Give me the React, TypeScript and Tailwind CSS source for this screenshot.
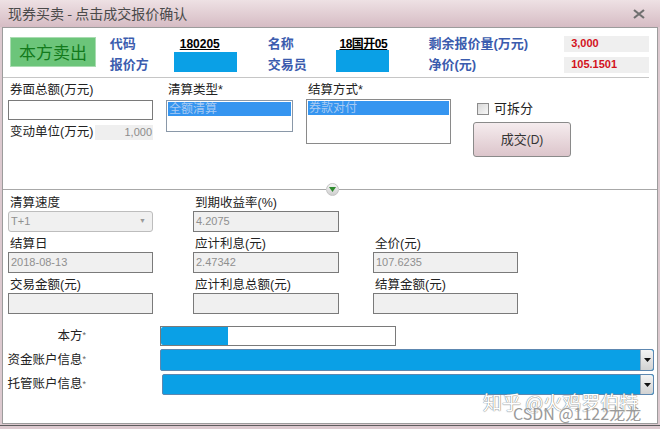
const blue = 'bg-[#0aa0e6]';

function Field({ label, value, select }: { label: string; value?: string; select?: boolean }) {
  return (
    <div className="flex flex-col">
      <div className="h-[15px] leading-[15px] text-[12.5px] text-[#222] pl-[2px] whitespace-nowrap">{label}</div>
      <div
        className={
          'flex items-center justify-between h-[21px] px-[2px] text-[11px] text-[#8f8f8f] bg-[#f0f0f0] ' +
          (select ? 'border border-[#bdbdbd] rounded-[3px]' : 'border border-[#7a7a7a]')
        }
      >
        <span>{value}</span>
        {select && <span className="mr-[4px] text-[7px] text-[#9a9a9a]">▼</span>}
      </div>
    </div>
  );
}

function DropArrow() {
  return (
    <div className="w-[13px] h-full flex items-center justify-center bg-gradient-to-b from-[#f4f4f4] to-[#d2d2d2] border-l border-[#9aa9b8] rounded-r-[2px]">
      <svg width="7" height="4" viewBox="0 0 7 4">
        <path d="M0 0h7L3.5 4z" fill="#111" />
      </svg>
    </div>
  );
}

function RowLabel({ text }: { text: string }) {
  return (
    <div className="ml-[3px] w-[80px] flex justify-end items-center whitespace-nowrap text-[12.5px]">
      {text}
      <span className="text-[9px] text-[#666]">*</span>
    </div>
  );
}

export default function App() {
  return (
    <div className="relative w-[660px] h-[429px] overflow-hidden bg-[#dcc9cf] font-['Liberation_Sans','Noto_Sans_CJK_SC',sans-serif]">
      {/* title bar */}
      <div className="h-[27px] flex items-center justify-between pl-[8px] pr-[15px] bg-gradient-to-b from-[#eee1e4] to-[#d6bcc4]">
        <span className="text-[14px] text-[#4a4a4a] font-['Noto_Sans_CJK_SC',sans-serif]">现券买卖 - 点击成交报价确认</span>
        <svg width="12" height="10" viewBox="0 0 12 10">
          <path d="M1 1l10 8M11 1L1 9" stroke="#707070" strokeWidth="2.2" />
        </svg>
      </div>

      {/* body */}
      <div className="ml-[2px] w-[656px] h-[397px] bg-white border border-[#9c9c9c] flex flex-col">
        {/* header */}
        <div className="flex items-start h-[50px] pt-[5px] mr-[8px] border-b border-[#c6c6c6] text-[13px] font-bold whitespace-nowrap">
          <div className="ml-[7px] mt-[4px] w-[86px] h-[30px] flex items-center justify-center bg-[#6cc57a] border border-[#a9dcb1] text-[#137a1c] text-[17px] font-normal font-['Noto_Sans_CJK_SC',sans-serif]">
            本方卖出
          </div>
          <div className="ml-[14px] w-[64px] text-[#3b5cae]">
            <div className="h-[21px] flex items-center">代码</div>
            <div className="h-[21px] flex items-center">报价方</div>
          </div>
          <div className="w-[63px]">
            <div className="h-[21px] flex items-center pl-[6px] text-[12px] underline text-black">180205</div>
            <div className={'h-[20px] -mt-[2px] ' + blue} />
          </div>
          <div className="ml-[31px] w-[68px] text-[#3b5cae]">
            <div className="h-[21px] flex items-center">名称</div>
            <div className="h-[21px] flex items-center">交易员</div>
          </div>
          <div className="w-[54px]">
            <div className="h-[21px] flex items-center pl-[4px] text-[12px] underline text-black tracking-[-0.5px]">18国开05</div>
            <div className={'h-[22px] -mt-[4px] ' + blue} />
          </div>
          <div className="ml-[39px] w-[136px] text-[#3b5cae]">
            <div className="h-[21px] flex items-center">剩余报价量(万元)</div>
            <div className="h-[21px] flex items-center">净价(元)</div>
          </div>
          <div className="w-[85px] text-[#d3121c] text-[11px]">
            <div className="h-[21px] flex items-center">
              <div className="w-full h-[16px] flex items-center pl-[7px] bg-[#efefef]">3,000</div>
            </div>
            <div className="h-[21px] flex items-center">
              <div className="w-full h-[16px] flex items-center pl-[7px] bg-[#efefef]">105.1501</div>
            </div>
          </div>
        </div>

        {/* settlement options */}
        <div className="flex items-start h-[105px] pt-[4px] text-[12.5px] text-[#222] whitespace-nowrap">
          <div className="ml-[5px] w-[145px]">
            <div className="h-[16px] leading-[16px] pl-[2px]">券面总额(万元)</div>
            <div className="mt-[2px] h-[20px] border border-[#7a7a7a]" />
            <div className="mt-[4px] h-[16px] flex items-center justify-between pl-[2px]">
              <span>变动单位(万元)</span>
              <span className="w-[58px] h-[15px] flex items-center justify-end pr-[1px] bg-[#efefef] text-[11px] text-[#8c8c8c]">1,000</span>
            </div>
          </div>
          <div className="ml-[13px] w-[127px]">
            <div className="h-[16px] leading-[16px] pl-[2px]">清算类型*</div>
            <div className="mt-[2px] h-[32px] border border-[#8a98a8] p-[1px]">
              <div className="h-[14px] leading-[14px] bg-[#3595f0] text-[#a8caf2] text-[12px] px-[1px]">全额清算</div>
            </div>
          </div>
          <div className="ml-[13px] w-[145px]">
            <div className="h-[16px] leading-[16px] pl-[2px]">结算方式*</div>
            <div className="mt-[1px] h-[45px] border border-[#8a8a8a] p-[1px]">
              <div className="h-[14px] leading-[14px] bg-[#3595f0] text-[#a8caf2] text-[12px] px-[1px]">券款对付</div>
            </div>
          </div>
          <div className="ml-[22px] w-[98px]">
            <div className="mt-[20px] h-[13px] flex items-center pl-[4px] gap-[5px]">
              <span className="w-[12px] h-[12px] border border-[#8c8c8c] bg-gradient-to-br from-[#d8d8d8] to-[#f8f8f8]" />
              <span className="text-[13px]">可拆分</span>
            </div>
            <div className="mt-[7px] h-[35px] flex items-center justify-center rounded-[3px] border border-[#8a8a8a] bg-gradient-to-b from-[#f5ecee] to-[#dcc5cb] text-[13px] text-[#333]">
              成交<span className="text-[12px]">(D)</span>
            </div>
          </div>
        </div>

        {/* divider */}
        <div className="flex items-center h-[13px]">
          <div className="w-[323px] h-px bg-[#a8a8a8]" />
          <div className="w-[13px] h-[13px] rounded-full bg-gradient-to-b from-[#f4f4f4] to-[#cfcfcf] border border-[#c4c4c4] flex items-center justify-center">
            <svg width="7" height="5" viewBox="0 0 7 5">
              <path d="M0 0h7L3.5 5z" fill="#2e8a2e" />
            </svg>
          </div>
          <div className="flex-1 h-px bg-[#a8a8a8]" />
        </div>

        {/* amounts */}
        <div className="flex items-start">
          <div className="ml-[5px] w-[145px] flex flex-col gap-[5px]">
            <Field label="清算速度" value="T+1" select />
            <Field label="结算日" value="2018-08-13" />
            <Field label="交易金额(元)" />
          </div>
          <div className="ml-[40px] w-[146px] flex flex-col gap-[5px]">
            <Field label="到期收益率(%)" value="4.2075" />
            <Field label="应计利息(元)" value="2.47342" />
            <Field label="应计利息总额(元)" />
          </div>
          <div className="ml-[34px] w-[145px] flex flex-col gap-[5px]">
            <div className="h-[36px]" />
            <Field label="全价(元)" value="107.6235" />
            <Field label="结算金额(元)" />
          </div>
        </div>

        {/* accounts */}
        <div className="mt-[12px] flex flex-col gap-[3px] text-[#222]">
          <div className="flex items-center h-[20px]">
            <RowLabel text="本方" />
            <div className="ml-[74px] w-[236px] h-[20px] border border-[#7a7a7a] flex">
              <div className={'w-[67px] h-full rounded-l-[2px] ' + blue} />
            </div>
          </div>
          <div className="flex items-center h-[22px]">
            <RowLabel text="资金账户信息" />
            <div className={'ml-[74px] w-[494px] h-[22px] flex justify-end rounded-[2px] border border-[#5d87b0] ' + blue}>
              <DropArrow />
            </div>
          </div>
          <div className="flex items-center h-[21px]">
            <RowLabel text="托管账户信息" />
            <div className={'ml-[76px] w-[492px] h-[21px] flex justify-end rounded-[2px] border border-[#5d87b0] ' + blue}>
              <DropArrow />
            </div>
          </div>
        </div>
      </div>

      <div className="mt-[1px] h-px bg-[#5c5c5c]" />

      {/* watermark */}
      <div className="absolute left-[483px] top-[388px] text-[19px] text-white font-['Noto_Sans_CJK_SC',sans-serif] [text-shadow:0_0_1px_#777,0_0_1px_#777]">
        知乎 @火鸡罗伯特
      </div>
      <div className="absolute left-[513px] top-[401px] text-[16px] text-[#9a9a9a] font-['Noto_Sans_CJK_SC',sans-serif]">
        CSDN @1122龙龙
      </div>
    </div>
  );
}
